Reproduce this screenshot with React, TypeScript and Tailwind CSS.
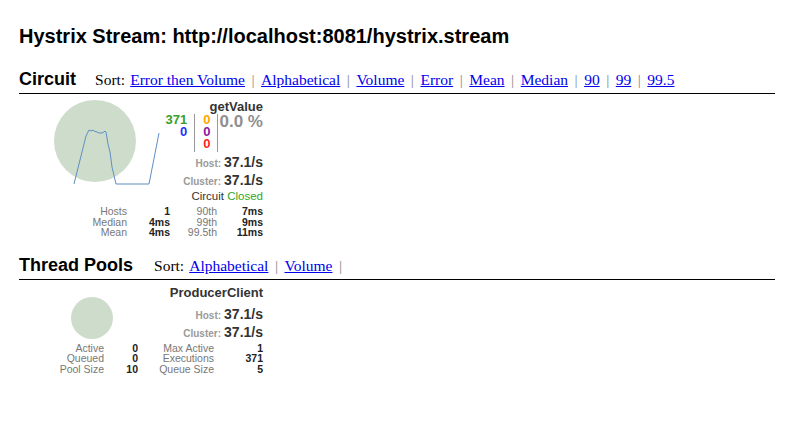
import React from "react";

const sans = { fontFamily: '"Liberation Sans", Arial, Helvetica, sans-serif' };

function SortLinks({ items, trailing }: { items: string[]; trailing: boolean }) {
  return (
    <div className="flex items-baseline text-[15.5px] leading-[17px]" style={{ fontFamily: '"Liberation Serif", "Times New Roman", serif' }}>
      <span className="text-black mr-[5px]">Sort:</span>
      {items.map((it, i) => (
        <React.Fragment key={it}>
          <a href="#" className="text-[#0000ee] underline">{it}</a>
          {(trailing || i < items.length - 1) && <span className="text-[#888] px-[6.5px]">|</span>}
        </React.Fragment>
      ))}
    </div>
  );
}

function Header({ title, items, gap, trailing }: { title: string; items: string[]; gap: string; trailing: boolean }) {
  return (
    <div className="flex items-baseline h-[26px] border-b border-black">
      <h3 className={"text-[18px] leading-[22px] font-bold text-black " + gap} style={sans}>{title}</h3>
      <SortLinks items={items} trailing={trailing} />
    </div>
  );
}

function Rate({ label, value }: { label: string; value: string }) {
  return (
    <div className="flex items-baseline justify-end h-[18px]">
      <span className="text-[10px] leading-[16px] font-bold text-[#9a9a9a] mr-[3px]">{label}</span>
      <span className="text-[14px] leading-[16px] font-bold text-[#333]">{value}</span>
    </div>
  );
}

export default function App() {
  const spark = "55,90 67,42 70,36 72,37 74,36 75,37 78,38 80,39 83,39 85,38 86,37 87,38 89,50 91,58 93,73 97,90 130,90 140,39";
  return (
    <div className="pl-[19px] pr-[15px] pt-[24px] bg-white min-h-[448px]" style={sans}>
      <h2 className="text-[20px] leading-[24px] font-bold text-black">Hystrix Stream: http://localhost:8081/hystrix.stream</h2>

      <div className="mt-[20px]">
        <Header title="Circuit" gap="mr-[19px]" trailing={false} items={["Error then Volume", "Alphabetical", "Volume", "Error", "Mean", "Median", "90", "99", "99.5"]} />
      </div>

      {/* Circuit monitor */}
      <div className="relative w-[245px] pt-[5px]">
        <svg className="absolute left-0 top-0" width="160" height="100" viewBox="0 0 160 100">
          <circle cx="76" cy="47" r="41" fill="#cedccb" />
          <polyline points={spark} fill="none" stroke="#5f8fc2" strokeWidth="1" />
        </svg>
        <div className="relative flex flex-col items-end pr-[1px]">
          <div className="text-[13px] leading-[15px] font-bold text-[#333]">getValue</div>
          <div className="flex items-start text-[13px] leading-[12px] font-bold">
            <div className="flex flex-col items-end pr-[7px] border-r border-[#999] h-[38px]">
              <span className="text-[#36a02b]">371</span>
              <span className="text-[#2233ff]">0</span>
            </div>
            <div className="flex flex-col items-end pl-[8px] pr-[6px] border-r border-[#999] h-[38px]">
              <span className="text-[#ffa500]">0</span>
              <span className="text-[#8b1a9a]">0</span>
              <span className="text-[#ff1f1f]">0</span>
            </div>
            <div className="pl-[2px] text-[17px] leading-[15px] font-bold text-[#8f8f8f]">0.0 %</div>
          </div>
          <div className="mt-[2px]">
            <Rate label="Host:" value="37.1/s" />
            <Rate label="Cluster:" value="37.1/s" />
          </div>
          <div className="text-[11.5px] leading-[13px] text-[#333]">
            Circuit <span className="text-[#2ea82a]">Closed</span>
          </div>
        </div>
        <div className="relative mt-[3px] grid grid-cols-[108px_43px_47px_46px] text-[10.5px] leading-[10.5px] text-right">
          <span className="text-[#777]">Hosts</span><span className="font-bold text-[#222]">1</span>
          <span className="text-[#777]">90th</span><span className="font-bold text-[#222]">7ms</span>
          <span className="text-[#777]">Median</span><span className="font-bold text-[#222]">4ms</span>
          <span className="text-[#777]">99th</span><span className="font-bold text-[#222]">9ms</span>
          <span className="text-[#777]">Mean</span><span className="font-bold text-[#222]">4ms</span>
          <span className="text-[#777]">99.5th</span><span className="font-bold text-[#222]">11ms</span>
        </div>
      </div>

      <div className="mt-[16px]">
        <Header title="Thread Pools" gap="mr-[21px]" trailing={true} items={["Alphabetical", "Volume"]} />
      </div>

      {/* Thread pool monitor */}
      <div className="relative w-[245px] pt-[5px]">
        <svg className="absolute left-0 top-0" width="160" height="80" viewBox="0 0 160 80">
          <circle cx="73" cy="38" r="21" fill="#cedccb" />
        </svg>
        <div className="relative flex flex-col items-end pr-[1px]">
          <div className="text-[13px] leading-[15px] font-bold text-[#333]">ProducerClient</div>
          <div className="mt-[6px]">
            <Rate label="Host:" value="37.1/s" />
            <Rate label="Cluster:" value="37.1/s" />
          </div>
        </div>
        <div className="relative mt-[1px] grid grid-cols-[85px_34px_76px_49px] text-[10.5px] leading-[10.5px] text-right">
          <span className="text-[#777]">Active</span><span className="font-bold text-[#222]">0</span>
          <span className="text-[#777]">Max Active</span><span className="font-bold text-[#222]">1</span>
          <span className="text-[#777]">Queued</span><span className="font-bold text-[#222]">0</span>
          <span className="text-[#777]">Executions</span><span className="font-bold text-[#222]">371</span>
          <span className="text-[#777]">Pool Size</span><span className="font-bold text-[#222]">10</span>
          <span className="text-[#777]">Queue Size</span><span className="font-bold text-[#222]">5</span>
        </div>
      </div>
    </div>
  );
}
